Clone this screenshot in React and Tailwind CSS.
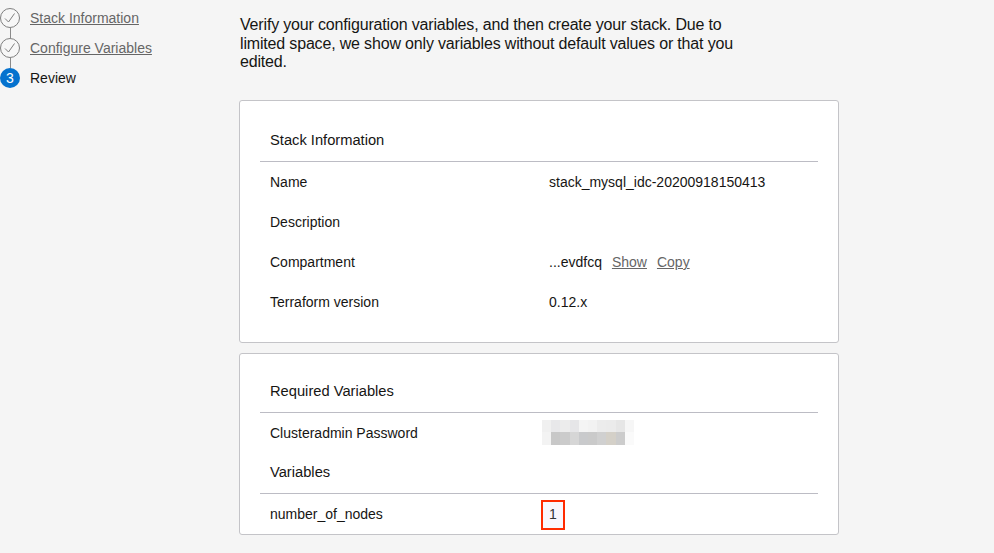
import React from 'react';

const Check = () => (
  <svg viewBox="0 0 20 20" className="w-5 h-5">
    <circle cx="10" cy="10" r="9.5" fill="#f7f7f7" stroke="#7f7f7f" strokeWidth="1" />
    <path d="M5 10.5 L8.5 14 L14.5 5.5" fill="none" stroke="#7f7f7f" strokeWidth="1" />
  </svg>
);

const steps = [
  { label: 'Stack Information', done: true },
  { label: 'Configure Variables', done: true },
  { label: 'Review', done: false, num: 3 },
];

const Row = ({ label, children }) => (
  <div className="flex h-10 items-center pt-[2px]">
    <div className="w-1/2 px-2.5">{label}</div>
    <div className="w-1/2 px-2.5">{children}</div>
  </div>
);

const Heading = ({ children }) => (
  <div className="h-[41px] px-2.5 flex items-center border-b border-[#bcbcc4] text-[14.7px] text-[#161513]">
    {children}
  </div>
);

const blurTop = ['#f0f0f0', '#e8e8ea', '#ececec', '#e6e6e8', '#f4f4f4', '#f2f2f2', '#ececec', '#ebebeb', '#e6e6e6', '#f6f6f6'];
const blurBottom = ['#f3f3f3', '#c8c8c8', '#cbcbcb', '#d6d6d6', '#c9cacc', '#cacaca', '#d0d0d0', '#d4d0c8', '#cccccc', '#fafafa'];

const Blurred = () => (
  <div className="flex flex-col w-[92px] -ml-[7px] -mt-[2px]">
    <div className="flex h-[12px]">
      {blurTop.map((c, i) => (
        <div key={i} className="flex-1" style={{ background: c }} />
      ))}
    </div>
    <div className="flex h-[13px]">
      {blurBottom.map((c, i) => (
        <div key={i} className="flex-1" style={{ background: c }} />
      ))}
    </div>
  </div>
);

export default function App() {
  return (
    <div className="min-h-[553px] bg-[#f5f5f5] flex font-['Liberation_Sans',Arial,sans-serif] text-[14px] text-[#161513]">
      {/* Steps */}
      <div className="w-[239px] shrink-0 pt-2">
        {steps.map((s, i) => (
          <div key={s.label} className="flex flex-col">
            <div className="flex items-center h-5">
              {s.done ? (
                <Check />
              ) : (
                <div className="w-5 h-5 rounded-full bg-[#0572ce] text-white flex items-center justify-center text-[14px]">
                  {s.num}
                </div>
              )}
              <span className={s.done ? 'ml-2.5 text-[#666] underline' : 'ml-2.5 text-[#161513]'}>{s.label}</span>
            </div>
            {i < steps.length - 1 && <div className="ml-[9.5px] w-px h-[10px] bg-[#8a8a8a]" />}
          </div>
        ))}
      </div>

      {/* Main */}
      <div className="w-[600px] pt-4">
        <p className="ml-px text-[16px] leading-[18.5px] tracking-[-0.17px] w-[516px] text-[#161513]">
          Verify your configuration variables, and then create your stack. Due to limited space, we show only variables without default values or that you edited.
        </p>

        <div className="mt-[28px] bg-white border border-[#c4c4c8] rounded-[3px] px-5 py-5">
          <Heading>Stack Information</Heading>
          <Row label="Name">stack_mysql_idc-20200918150413</Row>
          <Row label="Description" />
          <Row label="Compartment">
            <span>...evdfcq</span>
            <span className="ml-2.5 text-[#666] underline">Show</span>
            <span className="ml-2.5 text-[#666] underline">Copy</span>
          </Row>
          <Row label="Terraform version">0.12.x</Row>
        </div>

        <div className="mt-2.5 bg-white border border-[#c4c4c8] rounded-[3px] px-5 pt-[18px]">
          <Heading>Required Variables</Heading>
          <Row label="Clusteradmin Password">
            <Blurred />
          </Row>
          <Heading>Variables</Heading>
          <Row label="number_of_nodes">
            <span className="inline-flex items-center justify-center -ml-2 w-6 h-[30px] border-2 border-[#ff2a00] bg-[#f9f6fc] text-[#333]">1</span>
          </Row>
        </div>
      </div>
    </div>
  );
}
